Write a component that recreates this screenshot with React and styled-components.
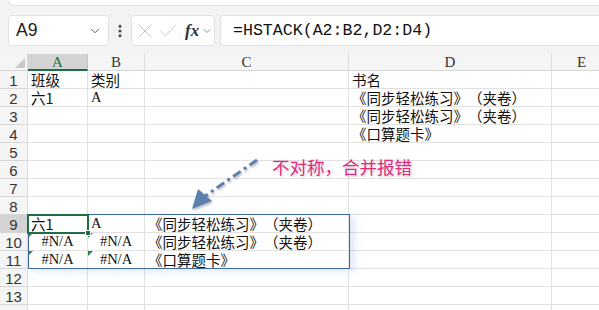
import React from 'react'
import styled, { createGlobalStyle } from 'styled-components'
import { ChevronDown, EllipsisVertical, X, Check } from 'lucide-react'

const GlobalStyle = createGlobalStyle`
  body {
    margin: 0;
    background: #f3f3f3;
    font-family: "Liberation Sans", "Noto Sans CJK SC", sans-serif;
    overflow: hidden;
  }
`

const COLS = [28, 60, 57, 204, 203, 60]
const LETTERS = ['A', 'B', 'C', 'D', 'E']
const ROW_COUNT = 14
const LAST_LABEL = 13

const DATA = {
  1: ['班级', '类别', '', '书名'],
  2: ['六1', 'A', '', '《同步轻松练习》（夹卷）'],
  3: ['', '', '', '《同步轻松练习》（夹卷）'],
  4: ['', '', '', '《口算题卡》'],
  9: ['六1', 'A', '《同步轻松练习》（夹卷）', ''],
  10: ['#N/A', '#N/A', '《同步轻松练习》（夹卷）', ''],
  11: ['#N/A', '#N/A', '《口算题卡》', ''],
}

const Page = styled.div`
  position: relative;
  width: 599px;
  height: 310px;
  overflow: hidden;
  background: #f3f3f3;
`

const RibbonEdge = styled.div`
  height: 6px;
  margin-left: 8px;
  box-sizing: border-box;
  background: #fff;
  border-left: 1px solid #e2e2e2;
  border-bottom: 1px solid #e2e2e2;
  border-bottom-left-radius: 6px;
`

const FormulaBar = styled.div`
  display: flex;
  align-items: stretch;
  height: 31px;
  margin: 9px 0 8px 8px;
`

const Box = styled.div`
  display: flex;
  align-items: center;
  box-sizing: border-box;
  background: #fff;
  border: 1px solid #e1e1e1;
  border-radius: 4px;
`

const NameBox = styled(Box)`
  width: 101px;
  padding: 0 6px 0 7px;
  justify-content: space-between;
  font-size: 17.5px;
  color: #222;
`

const Grip = styled.div`
  width: 22px;
  display: flex;
  align-items: center;
  justify-content: center;
  color: #444;
`

const ButtonsBox = styled(Box)`
  width: 84px;
  padding: 0 0 0 1px;
`

const Fx = styled.span`
  font-family: "Liberation Serif", serif;
  font-style: italic;
  font-weight: bold;
  font-size: 17px;
  color: #333;
  margin-left: 6px;
`

const FormulaInput = styled(Box)`
  flex: 1;
  margin-left: 5px;
  border-right: none;
  border-radius: 4px 0 0 4px;
  padding-left: 12px;
  font-family: "Liberation Mono", monospace;
  font-size: 16.6px;
  color: #111;
`

const Sheet = styled.div`
  position: relative;
  display: grid;
  grid-template-columns: ${COLS.map(w => w + 'px').join(' ')};
  grid-template-rows: 17px;
  grid-auto-rows: 18px;
  background: #fff;
`

const Head = styled.div`
  box-sizing: border-box;
  display: flex;
  align-items: center;
  justify-content: center;
  background: ${p => (p.$active ? '#d3d3d3' : '#f5f5f5')};
  border-right: 1px solid ${p => (p.$active ? '#c4c4c4' : '#dcdcdc')};
  border-bottom: ${p => (p.$active && p.$col ? '2px solid #1e6e42' : '1px solid #d6d6d6')};
  color: ${p => (p.$active && p.$col ? '#1e6e42' : '#333')};
  font-family: ${p => (p.$col ? '"Liberation Serif", serif' : '"Liberation Sans", sans-serif')};
  font-size: 15px;
  line-height: 1;
  padding-top: ${p => (p.$col ? '1px' : '2px')};
  overflow: hidden;
`

const Corner = styled(Head)`
  position: relative;
  &::after {
    content: '';
    position: absolute;
    right: 2px;
    bottom: 2px;
    border-style: solid;
    border-width: 0 0 10px 10px;
    border-color: transparent transparent #c9c9c9 transparent;
  }
`

const Cell = styled.div`
  position: relative;
  box-sizing: border-box;
  border-right: 1px solid #e1e1e1;
  border-bottom: 1px solid #e1e1e1;
  padding: 0 3px;
  display: flex;
  align-items: flex-end;
  justify-content: ${p => (p.$center ? 'center' : 'flex-start')};
  white-space: nowrap;
  overflow: hidden;
  font-family: ${p => (p.$latin ? '"Liberation Serif", serif' : '"Noto Sans CJK SC", sans-serif')};
  font-size: ${p => (p.$latin ? '14.5px' : '14.5px')};
  text-spacing-trim: space-all;
  font-feature-settings: "fwid" 0;
  line-height: 17px;
  color: #111;

  ${p =>
    p.$flag &&
    `&::before {
      content: '';
      position: absolute;
      left: 0;
      top: 0;
      border-style: solid;
      border-width: 5px 5px 0 0;
      border-color: #1f8b3a transparent transparent transparent;
    }`}
`

const Spill = styled.div`
  position: absolute;
  left: 28px;
  top: 160px;
  width: 322px;
  height: 55px;
  box-sizing: border-box;
  border: 1px solid #3d68a3;
  box-shadow: 4px 2px 8px rgba(120, 165, 225, 0.28);
  pointer-events: none;
  z-index: 2;
`

const Active = styled.div`
  position: absolute;
  left: 27px;
  top: 160px;
  width: 62px;
  height: 20px;
  box-sizing: border-box;
  border: 2px solid #1e6e42;
  z-index: 3;

  &::after {
    content: '';
    position: absolute;
    right: -4px;
    bottom: -4px;
    width: 4px;
    height: 4px;
    background: #1e6e42;
    border: 1px solid #fff;
  }
`

const Note = styled.div`
  position: absolute;
  left: 272px;
  top: 155px;
  font-family: "Noto Sans CJK SC", sans-serif;
  font-size: 17.5px;
  line-height: 24px;
  color: #e0287f;
  text-shadow: 0 0 2px #fff, 1px 1px 3px rgba(0, 0, 0, 0.25);
  z-index: 4;
`

const Arrow = styled.svg`
  position: absolute;
  left: 185px;
  top: 150px;
  z-index: 4;
  overflow: visible;
`

const isLatin = s => /^[#A-Za-z0-9/]+$/.test(s)

export default function App() {
  const rows = Array.from({ length: ROW_COUNT }, (_, i) => i + 1)
  return (
    <Page>
      <GlobalStyle />
      <RibbonEdge />
      <FormulaBar>
        <NameBox>
          <span>A9</span>
          <ChevronDown size={14} strokeWidth={1.6} color="#555" />
        </NameBox>
        <Grip>
          <EllipsisVertical size={16} strokeWidth={2.6} />
        </Grip>
        <ButtonsBox>
          <X size={24} strokeWidth={1} color="#c4c4c4" />
          <Check size={22} strokeWidth={1} color="#c4c4c4" />
          <Fx>fx</Fx>
          <ChevronDown size={12} strokeWidth={1.6} color="#777" style={{ marginLeft: 2 }} />
        </ButtonsBox>
        <FormulaInput>=HSTACK(A2:B2,D2:D4)</FormulaInput>
      </FormulaBar>

      <Sheet>
        <Corner />
        {LETTERS.map(l => (
          <Head key={l} $col $active={l === 'A'}>
            {l}
          </Head>
        ))}
        {rows.map(r => (
          <React.Fragment key={r}>
            <Head $active={r === 9}>{r <= LAST_LABEL ? r : ''}</Head>
            {LETTERS.map((l, ci) => {
              const v = (DATA[r] && DATA[r][ci]) || ''
              const err = v === '#N/A'
              return (
                <Cell key={l} $latin={v && isLatin(v)} $center={err} $flag={err}>
                  {v}
                </Cell>
              )
            })}
          </React.Fragment>
        ))}
        <Spill />
        <Active />
      </Sheet>

      <Note>不对称，合并报错</Note>
      <Arrow width="80" height="65" viewBox="0 0 80 65">
        <defs>
          <filter id="sh" x="-20%" y="-20%" width="140%" height="140%">
            <feDropShadow dx="1" dy="1.5" stdDeviation="1.2" floodColor="#000" floodOpacity="0.3" />
          </filter>
        </defs>
        <g filter="url(#sh)">
          <line
            x1="72"
            y1="10"
            x2="20"
            y2="46"
            stroke="#5b7fae"
            strokeWidth="3"
            strokeDasharray="9 4 3 4"
          />
          <polygon points="7,59 13,39 27,51" fill="#5b7fae" />
        </g>
      </Arrow>
    </Page>
  )
}
